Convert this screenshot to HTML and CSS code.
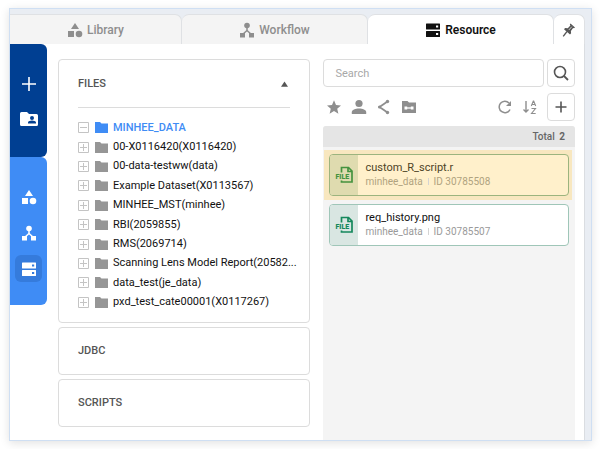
FILE: index.html
```html
<!DOCTYPE html>
<html lang="en">
<head>
<meta charset="utf-8">
<meta name="viewport" content="width=device-width, initial-scale=1">
<title>Resource</title>
<link rel="stylesheet" href="styles.css">
</head>
<body>
<svg class="defs" aria-hidden="true">
  <symbol id="i-shapes" viewBox="0 0 16 16"><path d="M8 1l4 6H4zM1 9h6v6H1z"/><circle cx="12" cy="12" r="3.3"/></symbol>
  <symbol id="i-flow" viewBox="0 0 16 16"><circle cx="8" cy="3.5" r="2.8"/><path d="M1 11h5v4.500H1zM10 11h5v4.500h-5z"/><path d="M8 5v4M3.500 12.500L8 8.500l4.500 4" fill="none" stroke="currentColor" stroke-width="1.500"/></symbol>
  <symbol id="i-server" viewBox="0 0 16 16"><path fill-rule="evenodd" d="M1.500 1.500h13a.5.5 0 0 1 .5.5v5a.5.5 0 0 1-.5.5h-13A.5.5 0 0 1 1 7V2a.5.5 0 0 1 .5-.5zM11 3.500v2h2.200v-2zM1.500 9h13a.5.5 0 0 1 .5.5v5a.5.5 0 0 1-.5.5h-13a.5.5 0 0 1-.5-.5v-5a.5.5 0 0 1 .5-.5zM11 11v2h2.200v-2z"/></symbol>
  <symbol id="i-folder" viewBox="0 0 13 11"><path d="M0 0h5l1.500 1.500H13V11H0z"/></symbol>
  <symbol id="i-file" viewBox="0 0 20 20"><path d="M7.500 7.500V2.500H14.500L18 6V17H7.500V15.500M14 2.500V6.500H18" fill="none" stroke="currentColor" stroke-width="1.700"/></symbol>
</svg>
<div class="frame">
  <nav class="tabs" aria-label="Sections">
    <button class="tab" type="button"><svg class="icon"><use href="#i-shapes"/></svg>Library</button>
    <button class="tab" type="button"><svg class="icon"><use href="#i-flow"/></svg>Workflow</button>
    <button class="tab tab-active" type="button"><svg class="icon"><use href="#i-server"/></svg>Resource</button>
    <button class="tab tab-pin" type="button" aria-label="Pin"><svg class="icon" viewBox="0 0 16 16"><path d="M9.500 1.500l4.500 4-1 .8-.9-.2-2.200 3 .2 2.200-1.100 1.100L3 7.200l1.100-1.100 2.700.1 2.600-2.600-.6-1.200z"/><path d="M6 9.500l-3.800 4.800" stroke="currentColor" stroke-width="1.300"/><path d="M10.800 4.700L7.800 8" stroke="#fff" stroke-width=".7"/></svg></button>
  </nav>
  <div class="panel">
    <aside class="rail">
      <div class="rail-group rail-top">
        <button class="rail-button" type="button" aria-label="Add"><svg class="icon" viewBox="0 0 16 16"><path d="M8 1v14M1 8h14" stroke="currentColor" stroke-width="1.600"/></svg></button>
        <button class="rail-button" type="button" aria-label="Shared folder"><svg class="icon icon-wide" viewBox="0 0 18 16"><path fill-rule="evenodd" d="M1.500 1H7l2 2h7.500A1.500 1.500 0 0 1 18 4.500v9a1.500 1.500 0 0 1-1.500 1.500h-15A1.500 1.500 0 0 1 0 13.500v-11A1.500 1.500 0 0 1 1.500 1zM12 5a2 2 0 1 0 0 4 2 2 0 0 0 0-4zM8 12.500h8v-1c0-1.200-2.500-1.900-4-1.900s-4 .7-4 1.900z"/></svg></button>
      </div>
      <div class="rail-group rail-bottom">
        <button class="rail-button" type="button" aria-label="Library"><svg class="icon"><use href="#i-shapes"/></svg></button>
        <button class="rail-button" type="button" aria-label="Workflow"><svg class="icon"><use href="#i-flow"/></svg></button>
        <button class="rail-button rail-current" type="button" aria-label="Resource"><svg class="icon"><use href="#i-server"/></svg></button>
      </div>
    </aside>
    <section class="sources">
      <div class="box">
        <button class="box-head box-open" type="button" aria-expanded="true">FILES<svg class="caret" viewBox="0 0 8 6"><path d="M4 0l4 6H0z"/></svg></button>
        <ul class="tree">
          <li class="node node-active"><button class="toggle" type="button" aria-label="Collapse"><svg viewBox="0 0 11 11"><path d="M.5.5h10v10H.5zM2 5.500h7"/></svg></button><svg class="folder"><use href="#i-folder"/></svg><span class="node-name">MINHEE_DATA</span></li>
          <li class="node"><button class="toggle" type="button" aria-label="Expand"><svg viewBox="0 0 11 11"><path d="M.5.5h10v10H.5zM2 5.500h7M5.500 2v7"/></svg></button><svg class="folder"><use href="#i-folder"/></svg><span class="node-name">00-X0116420(X0116420)</span></li>
          <li class="node"><button class="toggle" type="button" aria-label="Expand"><svg viewBox="0 0 11 11"><path d="M.5.5h10v10H.5zM2 5.500h7M5.500 2v7"/></svg></button><svg class="folder"><use href="#i-folder"/></svg><span class="node-name">00-data-testww(data)</span></li>
          <li class="node"><button class="toggle" type="button" aria-label="Expand"><svg viewBox="0 0 11 11"><path d="M.5.5h10v10H.5zM2 5.500h7M5.500 2v7"/></svg></button><svg class="folder"><use href="#i-folder"/></svg><span class="node-name">Example Dataset(X0113567)</span></li>
          <li class="node"><button class="toggle" type="button" aria-label="Expand"><svg viewBox="0 0 11 11"><path d="M.5.5h10v10H.5zM2 5.500h7M5.500 2v7"/></svg></button><svg class="folder"><use href="#i-folder"/></svg><span class="node-name">MINHEE_MST(minhee)</span></li>
          <li class="node"><button class="toggle" type="button" aria-label="Expand"><svg viewBox="0 0 11 11"><path d="M.5.5h10v10H.5zM2 5.500h7M5.500 2v7"/></svg></button><svg class="folder"><use href="#i-folder"/></svg><span class="node-name">RBI(2059855)</span></li>
          <li class="node"><button class="toggle" type="button" aria-label="Expand"><svg viewBox="0 0 11 11"><path d="M.5.5h10v10H.5zM2 5.500h7M5.500 2v7"/></svg></button><svg class="folder"><use href="#i-folder"/></svg><span class="node-name">RMS(2069714)</span></li>
          <li class="node"><button class="toggle" type="button" aria-label="Expand"><svg viewBox="0 0 11 11"><path d="M.5.5h10v10H.5zM2 5.500h7M5.500 2v7"/></svg></button><svg class="folder"><use href="#i-folder"/></svg><span class="node-name">Scanning Lens Model Report(20582...</span></li>
          <li class="node"><button class="toggle" type="button" aria-label="Expand"><svg viewBox="0 0 11 11"><path d="M.5.5h10v10H.5zM2 5.500h7M5.500 2v7"/></svg></button><svg class="folder"><use href="#i-folder"/></svg><span class="node-name">data_test(je_data)</span></li>
          <li class="node"><button class="toggle" type="button" aria-label="Expand"><svg viewBox="0 0 11 11"><path d="M.5.5h10v10H.5zM2 5.500h7M5.500 2v7"/></svg></button><svg class="folder"><use href="#i-folder"/></svg><span class="node-name">pxd_test_cate00001(X0117267)</span></li>
        </ul>
      </div>
      <div class="box"><button class="box-head" type="button" aria-expanded="false">JDBC</button></div>
      <div class="box"><button class="box-head" type="button" aria-expanded="false">SCRIPTS</button></div>
    </section>
    <section class="files">
      <form class="search">
        <input class="search-input" type="search" placeholder="Search" aria-label="Search">
        <button class="square" type="button" aria-label="Search"><svg class="icon line" viewBox="0 0 16 16"><circle cx="7" cy="7" r="5.500" stroke-width="1.600"/><path d="M11 11l4 4" stroke-width="1.800"/></svg></button>
      </form>
      <div class="toolbar">
        <button class="tool" type="button" aria-label="Favorites"><svg class="icon" viewBox="0 0 16 16"><path d="M8 1.200l2 4.700 5 .5-3.800 3.300 1.200 5L8 12.100l-4.400 2.600 1.200-5L1 6.400l5-.5z"/></svg></button>
        <button class="tool" type="button" aria-label="Mine"><svg class="icon" viewBox="0 0 16 16"><circle cx="8" cy="4.500" r="3.600"/><path d="M.8 15v-1.800C.8 11 4.500 9.600 8 9.600s7.200 1.400 7.200 3.600V15z"/></svg></button>
        <button class="tool" type="button" aria-label="Shared"><svg class="icon" viewBox="0 0 16 16"><path d="M11.500 2.500L3.500 8l8 5.500" fill="none" stroke="currentColor" stroke-width="1.800"/><circle cx="11.500" cy="2.500" r="1.700"/><circle cx="3.500" cy="8" r="1.500"/><circle cx="11.500" cy="13.500" r="1.700"/></svg></button>
        <button class="tool" type="button" aria-label="Linked folder"><svg class="icon" viewBox="0 0 16 16"><path d="M1 2h5.500l1.500 1.500h7V14H1z"/><path d="M4.500 9h7" stroke="#fff" stroke-width="1.300"/><path d="M3.500 7.500h2.700v3H3.500zM9.800 7.500h2.700v3H9.800z" fill="#fff"/></svg></button>
        <span class="spacer"></span>
        <button class="tool" type="button" aria-label="Refresh"><svg class="icon" viewBox="0 0 16 16"><path d="M13 10.500A5.700 5.700 0 1 1 12 4" fill="none" stroke="currentColor" stroke-width="1.500"/><path d="M14 2v5H9z"/></svg></button>
        <button class="tool" type="button" aria-label="Sort A to Z"><svg class="icon line" viewBox="0 0 16 16"><path d="M4 2v11M1.500 10.500L4 13l2.500-2.500" stroke-width="1.400"/><path d="M9.300 7l2-5h.4l2 5M10 5.500h3M9.500 9.500h4l-4 5h4.200" stroke-width="1.100"/></svg></button>
        <button class="square" type="button" aria-label="Add"><svg class="icon" viewBox="0 0 16 16"><path d="M8 2.500v11M2.500 8h11" stroke="currentColor" stroke-width="1.600"/></svg></button>
      </div>
      <div class="list">
        <div class="total">Total <b>2</b></div>
        <div class="items">
          <article class="item item-selected">
            <div class="card">
              <div class="badge"><svg viewBox="0 0 20 20"><use href="#i-file"/></svg><span class="badge-text">FILE</span></div>
              <div class="info"><div class="name">custom_R_script.r</div><div class="meta"><span>minhee_data</span><span class="id">ID 30785508</span></div></div>
            </div>
          </article>
          <article class="item">
            <div class="card">
              <div class="badge"><svg viewBox="0 0 20 20"><use href="#i-file"/></svg><span class="badge-text">FILE</span></div>
              <div class="info"><div class="name">req_history.png</div><div class="meta"><span>minhee_data</span><span class="id">ID 30785507</span></div></div>
            </div>
          </article>
        </div>
      </div>
    </section>
  </div>
</div>
</body>
</html>
```
FILE: styles.css
```css
* { box-sizing: border-box; }
body {
  margin: 0;
  padding: 8px 8px 8px 9px;
  background: #fff;
  color: #111;
  font: 11px/14px Roboto, "Liberation Sans", sans-serif;
}
button, input { font: inherit; color: inherit; }
button { display: flex; align-items: center; padding: 0; border: 0; background: none; }
svg { display: block; fill: currentColor; }
.defs { position: absolute; width: 0; height: 0; }
.icon { width: 16px; height: 16px; flex: none; }
.icon-wide { width: 18px; }
.line { fill: none; stroke: currentColor; }

.frame {
  display: flex;
  flex-direction: column;
  min-height: calc(100vh - 16px);
  padding: 5px 6px 0 0;
  border: 1px solid #cfdff3;
  background: #e9edf3;
  box-shadow: 0 2px 9px #0000001f;
}

.tabs { display: grid; grid-template-columns: 172fr 186fr 186fr 31px; background: #e9edf3; }
.tab {
  justify-content: center;
  gap: 4px;
  height: 30px;
  border: 1px solid #dfe1e4;
  border-width: 1px 1px 0 0;
  border-radius: 0 7px 0 0;
  background: #f4f4f4;
  color: #8e8e8e;
  font-size: 12px;
  font-weight: 500;
}
.tab + .tab { border-radius: 7px 7px 0 0; }
.tab-active { background: #fff; color: #111; font-weight: 600; }
.tab-pin { background: #fff; color: #555; }

.panel {
  display: grid;
  grid-template-columns: 37px 251fr 252fr;
  flex: 1;
  padding-right: 9px;
  border-right: 1px solid #dadde1;
  background: #fff;
}

.rail-group { display: flex; flex-direction: column; align-items: center; border-radius: 0 6px 6px 0; color: #fff; }
.rail-top { gap: 8px; height: 113px; padding-top: 26px; background: #003f92; }
.rail-bottom { gap: 9px; height: 148px; padding-top: 26px; background: #3f8cf5; }
.rail-button { justify-content: center; width: 27px; height: 27px; border-radius: 6px; }
.rail-current { background: #357bdc; }

.sources { display: flex; flex-direction: column; gap: 4px; min-width: 0; margin: 15px 0 0 11px; }
.box { padding: 0 19px; border: 1px solid #dcdcdc; border-radius: 4px; }
.box-head { justify-content: space-between; width: 100%; height: 46px; color: #555; font-weight: 500; }
.box-open { height: 48px; border-bottom: 1px solid #dcdcdc; }
.caret { width: 7px; height: 6px; margin-right: 2px; }
.tree {
  display: grid;
  grid-template-columns: minmax(0, 1fr);
  grid-auto-rows: 1fr;
  height: 194px;
  margin: 10px 0;
  padding: 0;
  list-style: none;
}
.node { display: flex; align-items: center; }
.toggle { margin-right: 6px; color: #c4c4c4; }
.toggle svg { width: 11px; height: 11px; fill: none; stroke: currentColor; }
.folder { flex: none; width: 13px; height: 11px; margin-right: 5px; color: #969696; }
.node-name { white-space: nowrap; }
.node-active .folder, .node-active .node-name { color: #3f8cf5; }
.node-active .node-name { font-weight: 500; }

.files { display: flex; flex-direction: column; min-width: 0; margin: 15px 0 0 13px; }
.search { display: flex; gap: 3px; }
.search-input { flex: 1; min-width: 0; height: 28px; padding: 0 11px; border: 1px solid #dcdcdc; border-radius: 4px; background: #fff; outline: 0; appearance: none; }
.search-input::placeholder { color: #a8a8a8; opacity: 1; }
.square { justify-content: center; width: 28px; height: 28px; border: 1px solid #dcdcdc; border-radius: 4px; color: #555; }
.toolbar { display: flex; align-items: center; gap: 9px; margin: 6px 0 5px; padding-left: 3px; color: #8e8e8e; }
.spacer { flex: 1; }

.list { flex: 1; border-radius: 3px 3px 0 0; background: #f4f4f4; }
.total { height: 21px; padding-right: 10px; border-radius: 3px 3px 0 0; background: #e5e5e5; color: #666; font-size: 10px; line-height: 21px; text-align: right; font-weight: 500; }
.total b { margin-left: 2px; }
.items { padding: 3px 3px 0 1px; }
.item { padding: 4px 3px 4px 5px; }
.item-selected { background: #f8e7bf; }
.card { display: flex; height: 42px; overflow: hidden; border: 1px solid #9fc6b8; border-radius: 4px; background: #fff; }
.badge { display: grid; place-items: center; flex: none; width: 28px; background: #d9e6e2; color: #15885c; }
.badge svg { grid-area: 1 / 1; width: 20px; height: 20px; }
.badge-text { grid-area: 1 / 1; justify-self: start; margin-left: 5px; padding: 3px 1px 0 0; font-size: 7px; line-height: 8px; font-weight: 900; }
.info { display: flex; flex-direction: column; justify-content: center; padding-left: 7px; }
.meta { display: flex; align-items: center; color: #9a9a9a; font-size: 10px; }
.id::before { content: ""; display: inline-block; width: 1px; height: 7px; margin: 0 5px; background: #d4d4d4; }
.item-selected .card { border-color: #9cb47e; background: #fff0cb; }
.item-selected .badge { background: #dfdbaf; color: #45933f; }
.item-selected .name { color: #4e4427; }
.item-selected .meta { color: #b0a37f; }
```
